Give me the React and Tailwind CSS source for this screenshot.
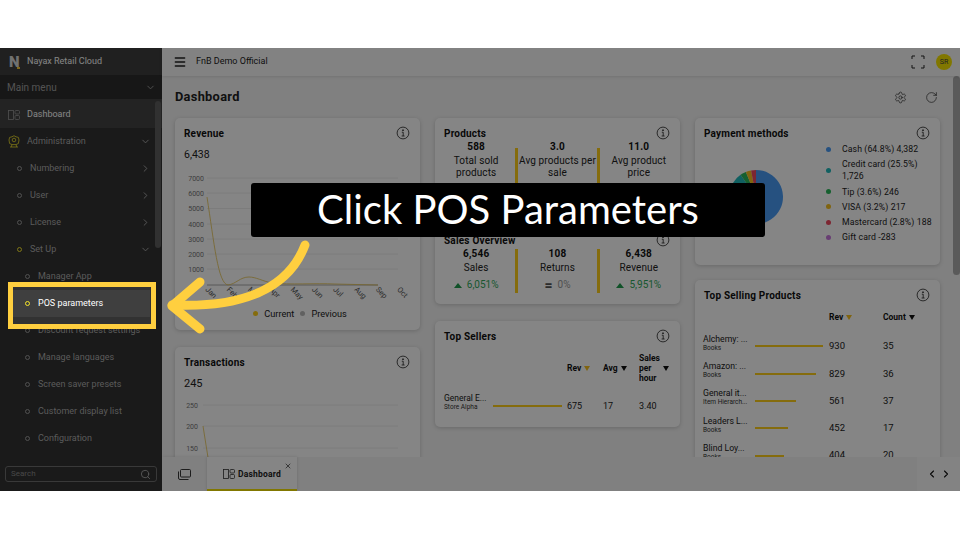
import { ChevronDown, ChevronRight, ChevronLeft, Menu, Settings, RotateCw, Search, X } from "lucide-react";

const FONT = "font-['Roboto','Liberation_Sans',sans-serif]";

function InfoIcon() {
    return (
        <svg width="14" height="14" viewBox="0 0 14 14" fill="none" stroke="#222" strokeWidth="0.8">
            <circle cx="7" cy="7" r="5.9" />
            <path d="M5.8 6.2H7.2V10M5.6 10H8.6" />
            <circle cx="7" cy="4.2" r="0.5" fill="#222" />
        </svg>
    );
}

function DashIcon({ color = "#aaa" }) {
    return (
        <svg width="12" height="10" viewBox="0 0 12 10" fill="none" stroke={color} strokeWidth="0.8">
            <rect x="0.5" y="0.5" width="5" height="9" />
            <rect x="7" y="0.5" width="4.5" height="3.5" rx="1" />
            <rect x="7" y="5.5" width="4.5" height="4" rx="1" />
        </svg>
    );
}

function MenuRow({ label, indent, chevron, yellow }) {
    return (
        <div className="flex items-center h-[27px] shrink-0 pr-[11px]" style={{ paddingLeft: indent }}>
            <span className={`w-[5px] h-[5px] rounded-full border ${yellow ? "border-[#f4e32a]" : "border-[#9a9a9a]"} mr-[8px] shrink-0`}></span>
            <span className="flex-1 text-[9px] text-[#adadad] whitespace-nowrap">{label}</span>
            {chevron === "right" && <ChevronRight size={11} className="text-[#adadad]" />}
            {chevron === "down" && <ChevronDown size={11} className="text-[#adadad]" />}
        </div>
    );
}

function Sidebar() {
    return (
        <div className="w-[162px] shrink-0 flex flex-col bg-[#323232] relative">
            <div className="h-[27px] flex items-center bg-[#3e3e3e] pl-[9px] pt-[1px] shrink-0">
                <span className="relative w-[18px] text-[15px] leading-[15px] font-black text-[#d8d8d8]">
                    N
                    <span className="absolute left-[8px] bottom-[1px] w-[3px] h-[2px] bg-[#f4c430]"></span>
                </span>
                <span className="text-[9px] text-white">Nayax Retail Cloud</span>
            </div>
            <div className="h-[26px] flex items-center justify-between bg-[#2c2c2c] pl-[7px] pr-[6px] pt-[1px] border-b-2 border-[#444] shrink-0">
                <span className="text-[10px] text-[#a0a0a0]">Main menu</span>
                <ChevronDown size={11} className="text-[#a0a0a0]" />
            </div>
            <div className="flex-1 min-h-0 flex flex-col">
                <div className="h-[27px] flex items-center bg-[#444] pl-[8px] shrink-0">
                    <DashIcon color="#999" />
                    <span className="ml-[7px] text-[9px] text-white">Dashboard</span>
                </div>
                <div className="flex items-center h-[27px] shrink-0 pl-[8px] pr-[11px]">
                    <svg width="12" height="13" viewBox="0 0 12 13" fill="none" stroke="#f4e32a" strokeWidth="0.8">
                        <path d="M6 0.7L8 1.8L10.4 2.4L11 5L10.4 8.5L8 9.6H4L1.6 8.5L1 5L1.6 2.4L4 1.8Z" />
                        <circle cx="6" cy="5" r="1.8" />
                        <path d="M2 12H10M4 9.6L3.2 12M8 9.6L8.8 12" />
                    </svg>
                    <span className="ml-[7px] flex-1 text-[9px] text-[#adadad]">Administration</span>
                    <ChevronDown size={11} className="text-[#adadad]" />
                </div>
                <MenuRow label="Numbering" indent={17} chevron="right" />
                <MenuRow label="User" indent={17} chevron="right" />
                <MenuRow label="License" indent={17} chevron="right" />
                <MenuRow label="Set Up" indent={17} chevron="down" yellow />
                <MenuRow label="Manager App" indent={25} />
                {/* spotlight row, sits above the dim layer */}
                <div className="relative z-30 h-[27px] shrink-0">
                    <div className="absolute left-[8px] top-[-8px] w-[148px] h-[47px] border-[5px] border-[#ffcf3f] bg-[#323232]"></div>
                    <div className="relative ml-[13px] w-[137px] h-full bg-[#3f3f3f] flex items-center pl-[12px]">
                        <span className="w-[5px] h-[5px] rounded-full border border-[#f4e32a] mr-[8px]"></span>
                        <span className="text-[9px] text-white">POS parameters</span>
                    </div>
                </div>
                <MenuRow label="Discount request settings" indent={25} />
                <MenuRow label="Manage languages" indent={25} />
                <MenuRow label="Screen saver presets" indent={25} />
                <MenuRow label="Customer display list" indent={25} />
                <MenuRow label="Configuration" indent={25} />
            </div>
            <div className="px-[5px] pb-[9px] shrink-0">
                <div className="h-[16px] flex items-center justify-between border border-[#6e6e6e] rounded-[3px] px-[5px]">
                    <span className="text-[8px] text-[#8a8a8a]">Search</span>
                    <Search size={11} className="text-[#aaa]" />
                </div>
            </div>
            <div className="absolute right-[1px] top-[53px] w-[6px] h-[147px] bg-[#5e5e5e] rounded-full"></div>
        </div>
    );
}

function Card({ title, className, children }) {
    return (
        <div className={`bg-white rounded-[5px] shadow-[0_1px_4px_rgba(0,0,0,0.18)] relative shrink-0 ${className}`}>
            <div className="absolute right-[10px] top-[8px]"><InfoIcon /></div>
            <div className="pl-[9px] pt-[10px] text-[10px] leading-[12px] font-bold text-[#111] tracking-[0.2px]">{title}</div>
            {children}
        </div>
    );
}

function RevenueChart() {
    const ys = [[176, 7000], [191, 6000], [206.5, 5000], [222, 4000], [237, 3000], [252, 2000], [267, 1000]];
    const months = ["Jan", "Feb", "Mar", "Apr", "May", "Jun", "Jul", "Aug", "Sep", "Oct"];
    return (
        <svg className="block mt-[9px]" width="245" height="132" viewBox="175 168 245 132">
            {ys.map(([y, v]) => (
                <g key={v}>
                    <line x1="207" x2="398" y1={y} y2={y} stroke="#eee" strokeWidth="1" />
                    <text x="204" y={y + 2.5} textAnchor="end" fontSize="7" fill="#777">{v}</text>
                </g>
            ))}
            <line x1="207" x2="378" y1="283" y2="283" stroke="#aaa" strokeWidth="1" />
            <path d="M207 195C214 240 218 282 228 283C236 282 240 275 249 275C256 275 262 279 272 281C290 283 315 281 335 282L378 283" fill="none" stroke="#e6c452" strokeWidth="0.8" />
            {months.map((m, i) => (
                <text key={m} fontSize="7.5" fill="#555" transform={`translate(${205 + i * 21.3} 288) rotate(45)`}>{m}</text>
            ))}
        </svg>
    );
}

function TransactionsChart() {
    return (
        <svg className="block mt-[11px]" width="245" height="70" viewBox="175 401 245 70">
            {[405, 426, 448].map((y) => <line key={y} x1="203" x2="398" y1={y} y2={y} stroke="#eee" />)}
            <text x="198" y="407.5" textAnchor="end" fontSize="7" fill="#777">250</text>
            <text x="198" y="429" textAnchor="end" fontSize="7" fill="#777">200</text>
            <text x="198" y="450.5" textAnchor="end" fontSize="7" fill="#777">150</text>
            <path d="M203 426L210 470" fill="none" stroke="#e6c452" strokeWidth="0.8" />
        </svg>
    );
}

function Stat({ value, label, delta, flat }) {
    return (
        <div className="flex-1 min-w-0 flex flex-col items-center text-center">
            <div className="text-[10px] leading-[11px] font-bold text-[#111] tracking-[0.2px]">{value}</div>
            <div className="mt-[3px] text-[10px] leading-[12px] text-[#222] tracking-[0.1px]">{label}</div>
            {delta && (
                <div className={`mt-[5px] text-[10px] leading-[12px] flex items-center gap-[5px] ${flat ? "text-[#999]" : "text-[#2fa85a]"}`}>
                    {flat ? <span className="text-[#555] text-[14px] leading-[12px] font-bold">=</span> : <span className="w-0 h-0 border-x-[4px] border-x-transparent border-b-[5px] border-b-[#1f9d4d]"></span>}
                    {delta}
                </div>
            )}
        </div>
    );
}

function StatDivider({ className }) {
    return <div className={`w-[3px] shrink-0 bg-[#ffd01a] ${className}`}></div>;
}

function Pie() {
    const data = [[64.8, "#4a9cf5"], [25.5, "#1fb8bb"], [3.6, "#2ab85a"], [3.2, "#f5c020"], [2.9, "#f04a60"]];
    let acc = 0;
    const pt = (p) => {
        const a = (p / 100) * Math.PI * 2;
        return `${28 + 27 * Math.sin(a)} ${28 - 27 * Math.cos(a)}`;
    };
    return (
        <svg width="56" height="56" viewBox="0 0 56 56">
            {data.map(([p, c]) => {
                const from = pt(acc);
                acc += p;
                return <path key={c} d={`M28 28L${from}A27 27 0 ${p > 50 ? 1 : 0} 1 ${pt(acc)}Z`} fill={c} />;
            })}
        </svg>
    );
}

function Legend({ color, children }) {
    return (
        <div className="flex items-center">
            <span className="w-[5px] h-[5px] rounded-full shrink-0 mr-[11px]" style={{ background: color }}></span>
            <span className="text-[8.7px] leading-[12px] text-[#222] tracking-[0.1px]">{children}</span>
        </div>
    );
}

function SortHead({ label, active, className }) {
    return (
        <div className={`flex items-center gap-[3px] text-[8.5px] font-bold text-[#111] ${className}`}>
            {label}
            <span className={`w-0 h-0 border-x-[3.5px] border-x-transparent border-t-[5px] ${active ? "border-t-[#f5c020]" : "border-t-[#111]"}`}></span>
        </div>
    );
}

const products = [
    { name: "Alchemy: ...", sub: "Books", bar: 68, rev: 930, count: 35 },
    { name: "Amazon: ...", sub: "Books", bar: 61, rev: 829, count: 36 },
    { name: "General it...", sub: "Item Hierarch...", bar: 41, rev: 561, count: 37 },
    { name: "Leaders L...", sub: "Books", bar: 33, rev: 452, count: 17 },
    { name: "Blind Loy...", sub: "Books", bar: 29, rev: 404, count: 20 },
];

function Main() {
    return (
        <div className="flex-1 min-w-0 flex flex-col bg-[#f5f5f5] relative">
            <div className="h-[28px] shrink-0 bg-[#fafafa] shadow-[0_1px_3px_rgba(0,0,0,0.1)] flex items-center pl-[11px] pr-[8px] relative">
                <Menu size={14} strokeWidth={2.5} className="text-[#222]" />
                <span className="text-[9px] text-[#222] ml-[9px]">FnB Demo Official</span>
                <svg className="ml-auto" width="14" height="14" viewBox="0 0 14 14" fill="none" stroke="#222" strokeWidth="1">
                    <path d="M1 4V1H4M10 1H13V4M13 10V13H10M4 13H1V10" />
                </svg>
                <span className="ml-[11px] w-[16px] h-[16px] rounded-full bg-[#f7e500] flex items-center justify-center text-[7px] text-[#444]">SR</span>
            </div>
            <div className="flex-1 min-h-0 flex overflow-hidden">
                <div className="flex-1 min-w-0 pl-[13px] pr-[12px]">
                    <div className="h-[42px] flex items-center">
                        <span className="text-[12.8px] font-bold text-[#222] tracking-[0.3px]">Dashboard</span>
                        <Settings size={13} strokeWidth={1.2} className="ml-auto text-[#222] mr-[18px]" />
                        <RotateCw size={13} strokeWidth={1.2} className="text-[#222] mr-[2px]" />
                    </div>
                    <div className="flex gap-[15px] items-start">
                        <div className="w-[245px] flex flex-col gap-[17px]">
                            <Card title="Revenue" className="h-[212px]">
                                <div className="pl-[9px] mt-[8px] text-[10.5px] leading-[13px] text-[#222]">6,438</div>
                                <RevenueChart />
                                <div className="mt-[5px] pl-[5px] flex items-center justify-center gap-[6px] text-[9.2px] text-[#222]">
                                    <span className="w-[5px] h-[5px] rounded-full bg-[#ffd01a]"></span>Current
                                    <span className="w-[5px] h-[5px] rounded-full bg-[#bbb]"></span>Previous
                                </div>
                            </Card>
                            <Card title="Transactions" className="h-[160px]">
                                <div className="pl-[9px] mt-[8px] text-[11px] leading-[13px] text-[#222]">245</div>
                                <TransactionsChart />
                            </Card>
                        </div>
                        <div className="w-[245px] flex flex-col gap-[16px]">
                            <Card title="Products" className="h-[91px]">
                                <div className="flex items-start px-[2px] mt-[1px]">
                                    <Stat value="588" label={<>Total sold<br />products</>} />
                                    <StatDivider className="h-[60px] mt-[7px]" />
                                    <Stat value="3.0" label={<>Avg products per<br />sale</>} />
                                    <StatDivider className="h-[60px] mt-[7px]" />
                                    <Stat value="11.0" label={<>Avg product<br />price</>} />
                                </div>
                            </Card>
                            <Card title="Sales Overview" className="h-[79px]">
                                <div className="flex items-start px-[2px] mt-[1px]">
                                    <Stat value="6,546" label="Sales" delta="6,051%" />
                                    <StatDivider className="h-[44px] mt-[1px]" />
                                    <Stat value="108" label="Returns" delta="0%" flat />
                                    <StatDivider className="h-[44px] mt-[1px]" />
                                    <Stat value="6,438" label="Revenue" delta="5,951%" />
                                </div>
                            </Card>
                            <Card title="Top Sellers" className="h-[106px] mt-[1px]">
                                <div className="flex items-center h-[34px] mt-[8px] pl-[132px]">
                                    <SortHead label="Rev" active className="w-[36px]" />
                                    <SortHead label="Avg" className="w-[36px]" />
                                    <div className="flex items-center gap-[3px] text-[8.5px] leading-[10px] font-bold text-[#111]">
                                        <span className="w-[21px] overflow-hidden">Sales<br />per<br />hour</span>
                                        <span className="w-0 h-0 border-x-[3.5px] border-x-transparent border-t-[5px] border-t-[#111]"></span>
                                    </div>
                                </div>
                                <div className="flex items-center mt-[7px] pl-[9px]">
                                    <div className="w-[49px] shrink-0">
                                        <div className="text-[8.5px] leading-[10px] text-[#222]">General E...</div>
                                        <div className="text-[6.5px] leading-[9px] text-[#333]">Store Alpha</div>
                                    </div>
                                    <div className="w-[74px] shrink-0 mt-[6px]"><div className="h-[2px] w-[69px] bg-[#ffd01a]"></div></div>
                                    <span className="w-[36px] text-[9px] text-[#222] mt-[8px]">675</span>
                                    <span className="w-[36px] text-[9px] text-[#222] mt-[8px]">17</span>
                                    <span className="text-[9px] text-[#222] mt-[8px]">3.40</span>
                                </div>
                            </Card>
                        </div>
                        <div className="w-[245px] flex flex-col gap-[15px]">
                            <Card title="Payment methods" className="h-[147px]">
                                <div className="flex items-center absolute left-[33px] top-[51px]"><Pie /></div>
                                <div className="absolute left-[131px] top-[25px] w-[108px] flex flex-col gap-[3.3px]">
                                    <Legend color="#4a9cf5">Cash (64.8%) 4,382</Legend>
                                    <Legend color="#1fb8bb">Credit card (25.5%) 1,726</Legend>
                                    <Legend color="#2ab85a">Tip (3.6%) 246</Legend>
                                    <Legend color="#f5c020">VISA (3.2%) 217</Legend>
                                    <Legend color="#f04a60"><span className="whitespace-nowrap">Mastercard (2.8%) 188</span></Legend>
                                    <Legend color="#c878dc">Gift card -283</Legend>
                                </div>
                            </Card>
                            <Card title="Top Selling Products" className="h-[200px]">
                                <div className="flex mt-[9px] pl-[134px]">
                                    <SortHead label="Rev" active className="w-[54px]" />
                                    <SortHead label="Count" />
                                </div>
                                <div className="mt-[6px] flex flex-col pl-[8px]">
                                    {products.map((p) => (
                                        <div key={p.name} className="flex items-center h-[27.3px]">
                                            <div className="w-[52px] shrink-0">
                                                <div className="text-[8.7px] leading-[10px] text-[#222] whitespace-nowrap">{p.name}</div>
                                                <div className="text-[6.5px] leading-[9px] text-[#333] whitespace-nowrap">{p.sub}</div>
                                            </div>
                                            <div className="w-[74px] shrink-0 mt-[6px]"><div className="h-[2px] bg-[#ffd01a]" style={{ width: p.bar }}></div></div>
                                            <span className="w-[54px] text-[9.5px] text-[#222] mt-[6px]">{p.rev}</span>
                                            <span className="text-[9.5px] text-[#222] mt-[6px]">{p.count}</span>
                                        </div>
                                    ))}
                                </div>
                            </Card>
                        </div>
                    </div>
                </div>
                <div className="w-[8px] shrink-0 pl-[1px]">
                    <div className="h-[199px] bg-[#adadad] rounded-full"></div>
                </div>
            </div>
            <div className="h-[34px] shrink-0 bg-[#f5f5f5] flex items-stretch relative">
                <div className="w-[45px] flex items-center justify-center shadow-[1px_0_3px_rgba(0,0,0,0.12)]">
                    <svg width="13" height="11" viewBox="0 0 13 11" fill="none" stroke="#222" strokeWidth="0.9">
                        <rect x="2.5" y="0.5" width="10" height="7.5" rx="1" />
                        <path d="M0.5 2.5V9A1.5 1.5 0 0 0 2 10.5H10.5" />
                    </svg>
                </div>
                <div className="w-[90px] bg-white border-b-2 border-[#f7e500] shadow-[0_0_3px_rgba(0,0,0,0.15)] relative flex items-center pl-[16px] pt-[2px] gap-[3px]">
                    <DashIcon color="#333" />
                    <span className="text-[8.5px] font-bold text-[#222] tracking-[0.2px]">Dashboard</span>
                    <X size={8} className="absolute right-[5px] top-[5px] text-[#222]" />
                </div>
                <div className="ml-auto w-[43px] bg-[#fbfbfb] flex items-center justify-center gap-[2px]">
                    <ChevronLeft size={12} className="text-[#111]" strokeWidth={2.2} />
                    <ChevronRight size={12} className="text-[#111]" strokeWidth={2.2} />
                </div>
            </div>
        </div>
    );
}

export default function App() {
    return (
        <div className={`w-[960px] h-[540px] bg-white pt-[48px] ${FONT}`}>
            <div className="relative w-[960px] h-[443px] flex overflow-hidden">
                <Sidebar />
                <Main />
                {/* dim layer */}
                <div className="absolute inset-0 z-10 bg-black/[0.48]"></div>
                {/* callout */}
                <div className="absolute z-20 left-[251px] top-[135px] w-[514px] h-[54px] pb-[2px] bg-black rounded-[3px] flex items-center justify-center">
                    <span className="font-['Lato',sans-serif] text-[40px] text-white">Click POS Parameters</span>
                </div>
                <svg className="absolute z-30 left-0 top-0" width="960" height="443" viewBox="0 48 960 443" fill="none" stroke="#ffcf3f" strokeWidth="9" strokeLinecap="round" strokeLinejoin="round">
                    <path d="M305 245C288 290 240 308 172 305" />
                    <path d="M200 282L172 306L200 329" />
                </svg>
            </div>
        </div>
    );
}
